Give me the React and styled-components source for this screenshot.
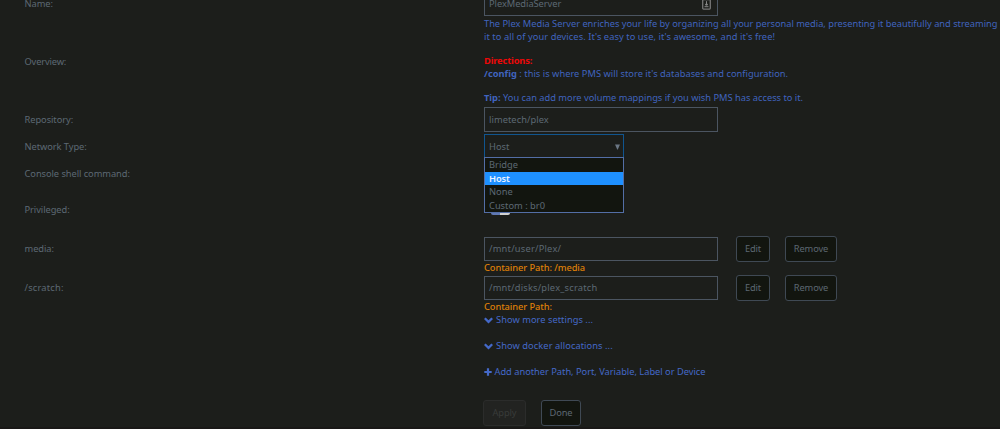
import React from "react";
import styled, { createGlobalStyle } from "styled-components";

const Global = createGlobalStyle`
  * { box-sizing: border-box; }
  html, body { margin: 0; background: #1c1e1b; }
  body { font: 9.3px/12px "Noto Sans", "Liberation Sans", sans-serif; color: #5d6974; overflow: hidden; }
`;

const Page = styled.main`
  height: 429px;
  padding: 0 0 0 25px;
  overflow: hidden;
  border-bottom: 2px solid #191817;
`;

const Row = styled.section`
  display: grid;
  grid-template-columns: 459px 1fr;
  align-items: ${(p) => p.$align || "center"};
  height: ${(p) => p.$height}px;
  margin-top: ${(p) => p.$gap || 0}px;
`;

const Label = styled.label`
  letter-spacing: ${(p) => p.$spacing ?? -0.06}px;
  margin-left: -0.5px;
  padding-top: ${(p) => p.$drop || 0}px;
`;

const Controls = styled.div`
  display: flex;
  align-items: center;
  position: relative;
`;

const Field = styled.div`
  display: flex;
  align-items: center;
  justify-content: space-between;
  width: ${(p) => p.$width || 234}px;
  height: ${(p) => p.$height || 24}px;
  flex: none;
  padding: ${(p) => p.$drop || 0}px ${(p) => (p.$open ? 3 : 6)}px 0 4px;
  border: 1px solid ${(p) => (p.$open ? "#10558f" : "#4b5561")};
  letter-spacing: ${(p) => p.$spacing ?? 0}px;
`;

const Description = styled.div`
  color: #4064bf;
`;

const Line = styled.div`
  height: 12.4px;
  line-height: 12.4px;
  white-space: nowrap;
  letter-spacing: ${(p) => p.$spacing ?? 0}px;
`;

const Directions = styled.b`
  color: #ec0808;
  letter-spacing: -0.15px;
`;

const Menu = styled.div`
  position: absolute;
  top: 23px;
  left: 0;
  z-index: 1;
  width: 140px;
  height: 56px;
  border: 1px solid #536ea6;
  background: #12150f;
`;

const Option = styled.div`
  height: 13.5px;
  padding-left: 4px;
  line-height: 13.5px;
  letter-spacing: ${(p) => (p.$active ? -0.15 : 0)}px;
  color: ${(p) => (p.$active ? "#e9f3ff" : "#5d6974")};
  background: ${(p) => (p.$active ? "#1e90ff" : "transparent")};
  font-weight: ${(p) => (p.$active ? 600 : 400)};
`;

const Toggle = styled.div`
  width: 19px;
  height: 9px;
  margin-left: 7px;
  border-radius: 2px;
  background: linear-gradient(90deg, #6079b4 50%, #d2d2d2 50%);
`;

const Button = styled.button`
  width: ${(p) => p.$width}px;
  height: 26px;
  margin-left: ${(p) => p.$gap || 0}px;
  padding: 0;
  border: 1px solid ${(p) => (p.disabled ? "#2b2c2b" : "#3f4954")};
  border-radius: 3px;
  background: ${(p) => (p.disabled ? "#222321" : "#12150f")};
  color: ${(p) => (p.disabled ? "#393b3a" : "#5d6872")};
  font: inherit;
  letter-spacing: -0.1px;
`;

const PathNote = styled.div`
  height: 13px;
  margin-left: 459px;
  color: #de7f08;
  font-weight: 500;
  line-height: 11px;
  letter-spacing: -0.09px;
`;

const Links = styled.nav`
  display: flex;
  flex-direction: column;
  gap: 14px;
  margin: 0 0 0 459px;
`;

const Action = styled.a`
  display: flex;
  align-items: center;
  gap: ${(p) => p.$gap ?? 3}px;
  height: 12px;
  color: #4469c8;
  letter-spacing: ${(p) => p.$spacing ?? 0}px;
`;

const Footer = styled.footer`
  display: flex;
  margin: 22px 0 0 458px;
`;

const Chevron = () => (
  <svg width="9" height="8" viewBox="0 0 9 8">
    <path d="M.8 2.2 4.5 5.8 8.2 2.2" fill="none" stroke="currentColor" strokeWidth="2.3" />
  </svg>
);

const Plus = () => (
  <svg width="8" height="8" viewBox="0 0 8 8">
    <path d="M4 .3v7.4M.3 4h7.4" stroke="currentColor" strokeWidth="2.2" />
  </svg>
);

const Arrow = () => (
  <svg width="5" height="6" viewBox="0 0 5 6">
    <path d="M0 .5h5L2.5 6z" fill="#6b7785" />
  </svg>
);

const Autofill = () => (
  <svg width="9" height="11" viewBox="0 0 9 11">
    <rect x=".7" y=".7" width="7.6" height="9.4" rx=".8" fill="none" stroke="#777" strokeWidth="1.3" />
    <path d="M4.5 2.2v4M2.5 7.7h4M4.5 4.2 3.5 6h2z" fill="#888" stroke="#888" />
  </svg>
);

export default function App() {
  return (
    <Page>
      <Global />
      <Row $height={24} $gap={-8}>
        <Label>Name:</Label>
        <Controls>
          <Field $spacing={-0.05}>PlexMediaServer<Autofill /></Field>
        </Controls>
      </Row>
      <Row $height={91}>
        <Label $spacing={-0.15}>Overview:</Label>
        <Description>
          <Line $spacing={-0.02}>The Plex Media Server enriches your life by organizing all your personal media, presenting it beautifully and streaming</Line>
          <Line $spacing={0.06}>it to all of your devices. It's easy to use, it's awesome, and it's free!</Line>
          <Line />
          <Line><Directions>Directions:</Directions></Line>
          <Line $spacing={0.02}><b>/config</b> : this is where PMS will store it's databases and configuration.</Line>
          <Line />
          <Line $spacing={-0.01}><b>Tip:</b> You can add more volume mappings if you wish PMS has access to it.</Line>
        </Description>
      </Row>
      <Row $height={25}>
        <Label $drop={1}>Repository:</Label>
        <Field $height={25} $drop={1} $spacing={0.05}>limetech/plex</Field>
      </Row>
      <Row $height={24} $gap={2}>
        <Label $drop={1}>Network Type:</Label>
        <Controls>
          <Field $width={140} $drop={1} $open>Host<Arrow /></Field>
          <Menu>
            <Option>Bridge</Option>
            <Option $active>Host</Option>
            <Option>None</Option>
            <Option>Custom : br0</Option>
          </Menu>
        </Controls>
      </Row>
      <Row $height={26} $gap={2}>
        <Label $drop={1}>Console shell command:</Label>
      </Row>
      <Row $height={26} $gap={11}>
        <Label>Privileged:</Label>
        <Toggle />
      </Row>
      <Row $height={26} $gap={13}>
        <Label>media:</Label>
        <Controls>
          <Field $spacing={0.22}>/mnt/user/Plex/</Field>
          <Button $width={34} $gap={18}>Edit</Button>
          <Button $width={52} $gap={15}>Remove</Button>
        </Controls>
      </Row>
      <PathNote>Container Path: /media</PathNote>
      <Row $height={26}>
        <Label $spacing={0.2}>/scratch:</Label>
        <Controls>
          <Field $spacing={0.2}>/mnt/disks/plex_scratch</Field>
          <Button $width={34} $gap={18}>Edit</Button>
          <Button $width={52} $gap={15}>Remove</Button>
        </Controls>
      </Row>
      <PathNote>Container Path:</PathNote>
      <Links>
        <Action $spacing={0.03}>
          <Chevron />Show more settings ...
        </Action>
        <Action $spacing={0.06}>
          <Chevron />Show docker allocations ...
        </Action>
        <Action $gap={2.5} $spacing={-0.02}>
          <Plus />Add another Path, Port, Variable, Label or Device
        </Action>
      </Links>
      <Footer>
        <Button $width={43} disabled>Apply</Button>
        <Button $width={40} $gap={15}>Done</Button>
      </Footer>
    </Page>
  );
}
